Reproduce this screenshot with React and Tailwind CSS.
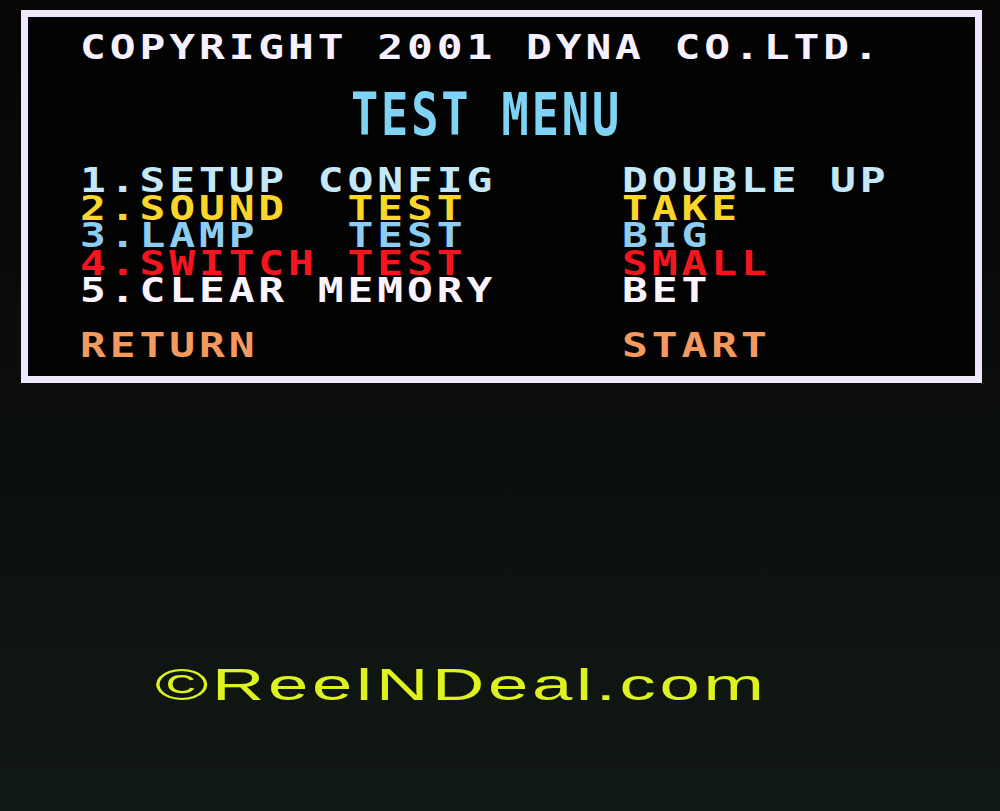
import React from "react";

function Line({ children, className = "" }) {
  return (
    <div
      className={
        "origin-left scale-x-[1.3] whitespace-pre tracking-[3px] leading-[27.5px] text-[33px] " +
        className
      }
    >
      {children}
    </div>
  );
}

const rows = [
  { l: "1.SETUP CONFIG", r: "DOUBLE UP", c: "text-[#c4e8f8]" },
  { l: "2.SOUND  TEST", r: "TAKE", c: "text-[#fbd62a]" },
  { l: "3.LAMP   TEST", r: "BIG", c: "text-[#8ecdf2]" },
  { l: "4.SWITCH TEST", r: "SMALL", c: "text-[#f6141e]" },
  { l: "5.CLEAR MEMORY", r: "BET", c: "text-[#fbf4ff]" },
];

export default function App() {
  return (
    <div className="w-[1000px] h-[811px] overflow-hidden bg-linear-to-b from-[#070605] via-[#0b0e0b] to-[#111914] pt-[10px] pl-[21px] flex flex-col">
      <div className="w-[961px] h-[373px] border-[7px] border-[#efe6ff] bg-[#030303] pt-[17px] pl-[52px] font-['DejaVu_Sans_Mono',monospace] font-bold">
        <Line className="text-[#f6f0ff]">COPYRIGHT 2001 DYNA CO.LTD.</Line>
        <div className="mt-[24.5px] ml-[271px] origin-left scale-x-[0.78] whitespace-pre tracking-[3.7px] text-[58px] leading-[58px] text-[#7fd4f6]">
          TEST MENU
        </div>
        <div className="mt-[23px] grid grid-cols-[542px_auto]">
          {rows.map((r) => (
            <React.Fragment key={r.l}>
              <Line className={r.c}>{r.l}</Line>
              <Line className={r.c}>{r.r}</Line>
            </React.Fragment>
          ))}
          <div className="h-[27.5px]" />
          <div className="h-[27.5px]" />
          <Line className="text-[#f59a5e]">RETURN</Line>
          <Line className="text-[#f59a5e]">START</Line>
        </div>
      </div>
      <div className="mt-[279px] ml-[134px] origin-left scale-x-[1.61] whitespace-pre tracking-[2.3px] text-[45px] leading-[45px] text-[#def21e] font-['Liberation_Sans',Arial,sans-serif]">
        ©ReelNDeal.com
      </div>
    </div>
  );
}
